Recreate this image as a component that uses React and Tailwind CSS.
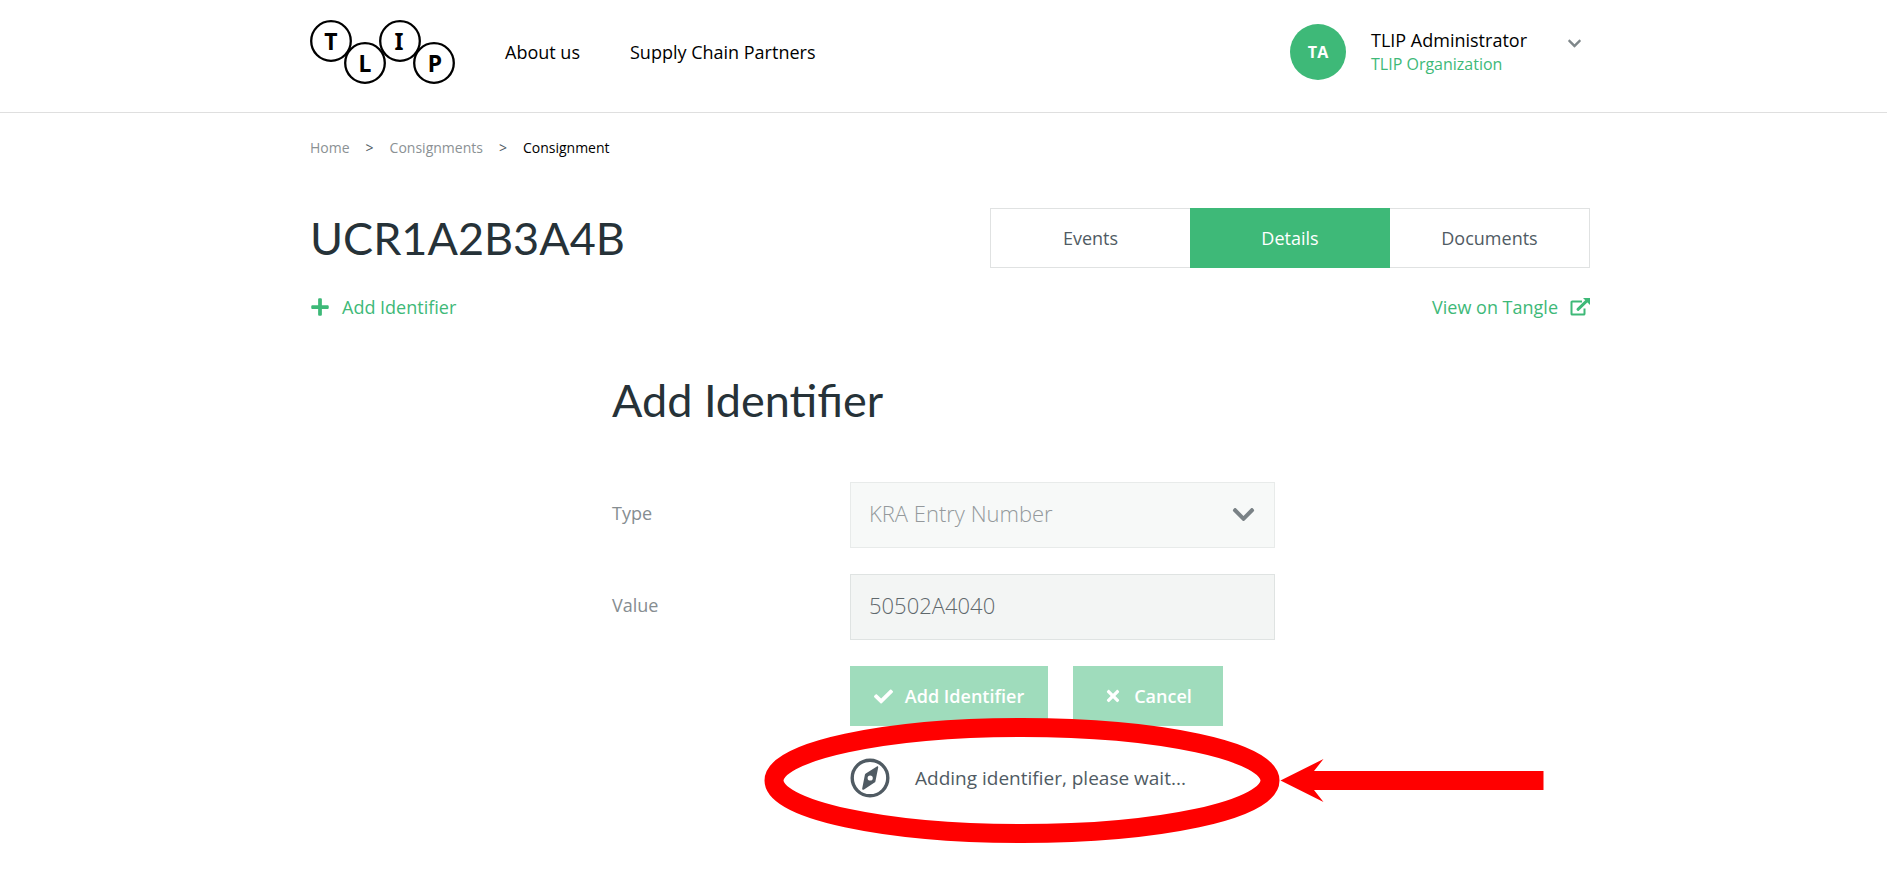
import { FaCheck, FaChevronDown, FaPlus, FaTimes } from "react-icons/fa";

const bubbles = [
  { letter: "T", cx: 21, cy: 21, tx: 21 },
  { letter: "L", cx: 55, cy: 43, tx: 55 },
  { letter: "I", cx: 90, cy: 21, tx: 89 },
  { letter: "P", cx: 124, cy: 43, tx: 125 },
];

const tabs = ["Events", "Details", "Documents"];

function Logo() {
  return (
    <svg viewBox="0 0 145 64" className="h-16 w-[145px]" role="img" aria-label="TLIP">
      {bubbles.map(({ letter, cx, cy, tx }) => (
        <g key={letter}>
          <circle cx={cx} cy={cy} r="19.8" fill="none" stroke="#000" strokeWidth="2.3" />
          <text x={tx} y={cy + 9} textAnchor="middle" fontSize="23" fontWeight="700" fontFamily="'Noto Sans', sans-serif">
            {letter}
          </text>
        </g>
      ))}
    </svg>
  );
}

function ExternalLinkIcon() {
  return (
    <svg viewBox="0 0 20 18" className="h-[18px] w-5" fill="none" stroke="currentColor" aria-hidden="true">
      <path d="M12 3.5H2.2a.7.7 0 0 0-.7.7v11.6a.7.7 0 0 0 .7.7h11.6a.7.7 0 0 0 .7-.7V10.5" strokeWidth="2" />
      <path d="M8 11.3 16.5 3.2" strokeWidth="3" strokeLinecap="round" />
      <path d="M13 0H20v7Z" fill="currentColor" stroke="none" />
    </svg>
  );
}

function CompassIcon() {
  return (
    <svg viewBox="0 0 40 40" className="size-10" aria-hidden="true">
      <circle cx="20" cy="20" r="17.8" fill="none" stroke="currentColor" strokeWidth="3.4" />
      <path
        d="M26.9 8.4 15.8 15.6a2 2 0 0 0-.9 1.2L12.2 30.4c-.2 1.3.8 1.8 1.8 1.2l10.5-7a2 2 0 0 0 .9-1.2L28.2 9.5c.1-1-.6-1.6-1.3-1.1ZM20.2 17.4a2.6 2.6 0 1 1 0 5.2 2.6 2.6 0 0 1 0-5.2Z"
        fill="currentColor"
        fillRule="evenodd"
      />
    </svg>
  );
}

function Callout() {
  return (
    <svg
      viewBox="0 0 780 126"
      className="pointer-events-none absolute -top-10 -left-[86px] h-[126px] w-[780px] max-w-none"
      aria-hidden="true"
    >
      <ellipse cx="258" cy="62.5" rx="248" ry="53" fill="none" stroke="#f00" strokeWidth="19" />
      <path d="M516.5 62.5 559.5 41 550 53H779.5V72H550L559.5 84Z" fill="#f00" />
    </svg>
  );
}

function Header() {
  return (
    <header className="border-b border-[#dfdfdf] pb-2 pl-[13px]">
      <div className="mx-auto flex h-[104px] max-w-[1280px] items-center justify-between">
        <div className="flex items-center">
          <a href="#home">
            <Logo />
          </a>
          <nav className="ml-[50px] flex gap-[50px] text-lg leading-6 text-black">
            <a href="#about">About us</a>
            <a href="#partners">Supply Chain Partners</a>
          </nav>
        </div>
        <button type="button" className="flex items-center text-left">
          <span className="flex size-14 items-center justify-center rounded-full bg-[#3eb978] text-base font-bold text-white">
            TA
          </span>
          <span className="ml-[25px] flex flex-col">
            <span className="text-lg leading-6 text-black">TLIP Administrator</span>
            <span className="text-base leading-6 text-[#3eb978]">TLIP Organization</span>
          </span>
          <FaChevronDown className="mr-2 mb-[18px] ml-10 size-[15px] text-[#7f878a]" />
        </button>
      </div>
    </header>
  );
}

export default function App() {
  return (
    <div className="min-h-screen bg-white font-['Open_Sans',sans-serif] text-[#505b63]">
      <Header />
      <main className="pb-12">
        <div className="pl-[13px]">
          <div className="mx-auto max-w-[1280px]">
            <nav aria-label="Breadcrumb" className="flex gap-4 pt-[25px] text-sm leading-5">
              <a href="#home" className="text-[#8b9194]">Home</a>
              <span>&gt;</span>
              <a href="#consignments" className="text-[#8b9194]">Consignments</a>
              <span>&gt;</span>
              <a href="#consignment" className="text-black">Consignment</a>
            </nav>
            <div className="mt-[50px] flex items-center justify-between">
              <h1 className="font-['Lato',sans-serif] text-[45px] leading-[60px] text-[#263238]">UCR1A2B3A4B</h1>
              <div className="grid w-[600px] grid-cols-3">
                {tabs.map((tab) => (
                  <button
                    key={tab}
                    type="button"
                    className={
                      tab === "Details"
                        ? "h-[60px] border border-[#3eb978] bg-[#3eb978] text-lg text-white"
                        : "h-[60px] border border-[#e0e2e2] text-lg first:border-r-0 last:border-l-0"
                    }
                  >
                    {tab}
                  </button>
                ))}
              </div>
            </div>
            <div className="mt-[27px] flex justify-between text-lg leading-6 text-[#3eb978]">
              <button type="button" className="flex items-center gap-3">
                <FaPlus className="size-5" />
                Add Identifier
              </button>
              <a href="#tangle" className="flex items-center gap-3">
                View on Tangle
                <ExternalLinkIcon />
              </a>
            </div>
          </div>
        </div>

        <form className="mx-auto mt-[51px] max-w-[663px]" onSubmit={(event) => event.preventDefault()}>
          <h2 className="font-['Lato',sans-serif] text-[45px] leading-[60px] text-[#263238]">Add Identifier</h2>
          <div className="mt-[52px] grid grid-cols-[238px_1fr] items-center gap-y-[26px]">
            <label htmlFor="type" className="pb-1 text-lg leading-6 text-[#868d91]">Type</label>
            <div className="relative">
              <select
                id="type"
                disabled
                className="h-[66px] w-full appearance-none border border-[#e8ebea] bg-[#f7f9f8] px-[18px] pb-1 text-[22px] font-light text-[#94999c] opacity-100"
              >
                <option>KRA Entry Number</option>
              </select>
              <FaChevronDown className="pointer-events-none absolute top-[20px] right-[19px] size-[25px] text-[#7a8286]" />
            </div>
            <label htmlFor="value" className="pb-1 text-lg leading-6 text-[#868d91]">Value</label>
            <input
              id="value"
              disabled
              defaultValue="50502A4040"
              className="h-[66px] w-full border border-[#dfe3e2] bg-[#f3f5f4] px-[18px] pb-1 text-[22px] font-light text-[#5f686c]"
            />
            <div className="col-start-2">
              <div className="flex gap-[25px] text-lg font-semibold text-white">
                <button type="submit" disabled className="flex h-[60px] w-[198px] items-center justify-center gap-3 bg-[#9fdcbc]">
                  <FaCheck className="size-[19px]" />
                  Add Identifier
                </button>
                <button type="button" disabled className="flex h-[60px] w-[150px] items-center justify-center gap-3 bg-[#9fdcbc]">
                  <FaTimes className="size-[18px]" />
                  Cancel
                </button>
              </div>
              <div role="status" className="relative mt-8 flex items-center gap-[25px] text-[19px] leading-6">
                <CompassIcon />
                Adding identifier, please wait...
                <Callout />
              </div>
            </div>
          </div>
        </form>
      </main>
    </div>
  );
}
